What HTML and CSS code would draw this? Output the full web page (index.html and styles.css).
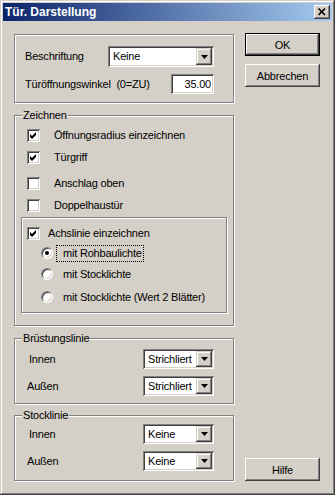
FILE: index.html
```html
<!DOCTYPE html>
<html lang="de">
<head>
  <meta charset="UTF-8">
  <title>Tür. Darstellung</title>
  <link rel="stylesheet" href="styles.css">
</head>
<body>
  <div class="window">
    <div class="titlebar">
      <span class="title">Tür. Darstellung</span>
      <span class="close-btn">
        <svg width="16" height="14" viewBox="0 0 16 14"><path d="M4.5 3.5 L11 10 M11 3.5 L4.5 10" stroke="#000" stroke-width="1.7" fill="none"/></svg>
      </span>
    </div>

    <div class="content">
      <div class="left">
        <div class="group group-top">
          <div class="row row-combo">
            <span class="label">Beschriftung</span>
            <div class="combo combo-wide">
              <span class="combo-text">Keine</span>
              <span class="drop"><svg width="7" height="4" viewBox="0 0 7 4"><polygon points="0,0 7,0 3.5,4" fill="#000"/></svg></span>
            </div>
          </div>
          <div class="row row-edit">
            <span class="label">Türöffnungswinkel&nbsp; (0=ZU)</span>
            <div class="edit">35.00</div>
          </div>
        </div>

        <div class="group group-draw">
          <div class="caption">Zeichnen</div>
          <div class="check-row first">
            <span class="box"><svg width="7" height="7" viewBox="0 0 7 7"><polygon points="0,2 2,4 6,0 6,3 2,7 0,5" fill="#000"/></svg></span>
            <span class="check-label">Öffnungsradius einzeichnen</span>
          </div>
          <div class="check-row">
            <span class="box"><svg width="7" height="7" viewBox="0 0 7 7"><polygon points="0,2 2,4 6,0 6,3 2,7 0,5" fill="#000"/></svg></span>
            <span class="check-label">Türgriff</span>
          </div>
          <div class="check-row third">
            <span class="box"></span>
            <span class="check-label">Anschlag oben</span>
          </div>
          <div class="check-row">
            <span class="box"></span>
            <span class="check-label">Doppelhaustür</span>
          </div>

          <div class="subgroup">
            <div class="sub-check">
              <span class="box"><svg width="7" height="7" viewBox="0 0 7 7"><polygon points="0,2 2,4 6,0 6,3 2,7 0,5" fill="#000"/></svg></span>
              <span class="sub-label">Achslinie einzeichnen</span>
            </div>
            <div class="radio-row">
              <span class="radio checked"><span class="dot"></span></span>
              <span class="radio-label focus">mit Rohbaulichte</span>
            </div>
            <div class="radio-row r2">
              <span class="radio"></span>
              <span class="radio-label">mit Stocklichte</span>
            </div>
            <div class="radio-row r3">
              <span class="radio"></span>
              <span class="radio-label">mit Stocklichte (Wert 2 Blätter)</span>
            </div>
          </div>
        </div>

        <div class="group group-line group-bruest">
          <div class="caption">Brüstungslinie</div>
          <div class="row line-row first">
            <span class="label in">Innen</span>
            <div class="combo combo-small">
              <span class="combo-text">Strichliert</span>
              <span class="drop"><svg width="7" height="4" viewBox="0 0 7 4"><polygon points="0,0 7,0 3.5,4" fill="#000"/></svg></span>
            </div>
          </div>
          <div class="row line-row">
            <span class="label out">Außen</span>
            <div class="combo combo-small">
              <span class="combo-text">Strichliert</span>
              <span class="drop"><svg width="7" height="4" viewBox="0 0 7 4"><polygon points="0,0 7,0 3.5,4" fill="#000"/></svg></span>
            </div>
          </div>
        </div>

        <div class="group group-line group-stock">
          <div class="caption">Stocklinie</div>
          <div class="row line-row first">
            <span class="label in">Innen</span>
            <div class="combo combo-small">
              <span class="combo-text">Keine</span>
              <span class="drop"><svg width="7" height="4" viewBox="0 0 7 4"><polygon points="0,0 7,0 3.5,4" fill="#000"/></svg></span>
            </div>
          </div>
          <div class="row line-row">
            <span class="label out">Außen</span>
            <div class="combo combo-small">
              <span class="combo-text">Keine</span>
              <span class="drop"><svg width="7" height="4" viewBox="0 0 7 4"><polygon points="0,0 7,0 3.5,4" fill="#000"/></svg></span>
            </div>
          </div>
        </div>
      </div>

      <div class="right">
        <div class="btn default"><div class="btn-face">OK</div></div>
        <div class="btn cancel"><div class="btn-face">Abbrechen</div></div>
        <div class="btn help"><div class="btn-face">Hilfe</div></div>
      </div>
    </div>
  </div>
</body>
</html>
```

FILE: styles.css
```css
body {
  margin: 0;
  font-family: "Liberation Sans", Arial, sans-serif;
  font-size: 11px;
  letter-spacing: -0.2px;
  color: #000;
  background: #d4d0c8;
}

.window {
  width: 335px;
  height: 495px;
  box-sizing: border-box;
  padding: 3px;
  background: #d4d0c8;
  box-shadow: inset -1px -1px #404040, inset 1px 1px #d4d0c8, inset -2px -2px #808080, inset 2px 2px #fff;
  display: flex;
  flex-direction: column;
}

.titlebar {
  height: 18px;
  flex: none;
  display: flex;
  align-items: center;
  justify-content: space-between;
  padding: 0 2px 0 2px;
  background: linear-gradient(to right, #0a246a, #a6caf0);
}

.title {
  color: #fff;
  font-weight: bold;
  font-size: 12px;
  letter-spacing: 0;
}

.close-btn {
  width: 16px;
  height: 14px;
  display: flex;
  background: #d4d0c8;
  box-shadow: inset -1px -1px #404040, inset 1px 1px #fff, inset -2px -2px #808080;
}

.content {
  flex: 1;
  display: flex;
  gap: 11px;
  padding: 12px 12px 11px 11px;
  min-height: 0;
}

.left {
  width: 220px;
  padding-top: 1px;
  display: flex;
  flex-direction: column;
}

.right {
  width: 75px;
  display: flex;
  flex-direction: column;
}

/* group boxes */
.group {
  box-sizing: border-box;
  border: 1px solid #808080;
  box-shadow: inset 1px 1px #fff, 1px 1px #fff;
  flex: none;
}

.caption {
  width: fit-content;
  margin: -7px 0 0 7px;
  padding: 0 1px;
  line-height: 13px;
  background: #d4d0c8;
}

.row {
  display: flex;
  align-items: center;
  justify-content: space-between;
  line-height: 13px;
}

.group-top {
  height: 69px;
  padding: 11px 19px 0 10px;
}

.row-combo { height: 21px; }
.row-edit { height: 20px; margin-top: 7px; }

.group-draw {
  height: 211px;
  margin-top: 12px;
}

.check-row {
  height: 22px;
  margin-left: 12px;
  display: flex;
  align-items: center;
  line-height: 13px;
}

.check-row.first { margin-top: 2px; }
.check-row.third { margin-top: 4px; }

.check-label { margin-left: 14px; }

.box {
  width: 13px;
  height: 13px;
  box-sizing: border-box;
  background: #fff;
  box-shadow: inset 1px 1px #808080, inset -1px -1px #fff, inset 2px 2px #404040, inset -2px -2px #d4d0c8;
  display: flex;
  align-items: center;
  justify-content: center;
  flex: none;
}

.subgroup {
  width: 206px;
  height: 96px;
  box-sizing: border-box;
  margin: 1px 0 0 6px;
  padding: 5px 0 0 5px;
  border: 1px solid #808080;
  box-shadow: inset 1px 1px #fff, 1px 1px #fff;
}

.sub-check {
  height: 20px;
  display: flex;
  align-items: center;
  line-height: 13px;
}

.sub-label { margin-left: 8px; }

.radio-row {
  height: 20px;
  margin-left: 14px;
  display: flex;
  align-items: center;
  line-height: 13px;
}

.radio-row.r2 { margin-top: 1px; }
.radio-row.r3 { margin-top: 3px; }

.radio {
  width: 12px;
  height: 12px;
  box-sizing: border-box;
  border-radius: 50%;
  background: #fff;
  border: 1px solid;
  border-color: #808080 #fff #fff #808080;
  box-shadow: inset 1px 1px #404040, inset -1px -1px #d4d0c8;
  display: flex;
  align-items: center;
  justify-content: center;
  flex: none;
}

.dot {
  width: 4px;
  height: 4px;
  border-radius: 50%;
  background: #000;
}

.radio-label {
  margin-left: 3px;
  padding: 1px 1px 1px 6px;
  border: 1px dotted transparent;
}

.radio-label.focus { border-color: #000; }

.group-line {
  height: 66px;
  padding-right: 19px;
}

.group-bruest { margin-top: 12px; }
.group-stock { margin-top: 11px; }

.line-row { height: 20px; margin-top: 7px; }
.group-bruest .line-row.first { margin-top: 4px; }
.group-stock .line-row.first { margin-top: 2px; }

.label.in { margin-left: 14px; }
.label.out { margin-left: 12px; }

/* combo + edit */
.combo {
  box-sizing: border-box;
  display: flex;
  align-items: stretch;
  padding: 2px;
  background: #fff;
  box-shadow: inset 1px 1px #808080, inset -1px -1px #fff, inset 2px 2px #404040, inset -2px -2px #d4d0c8;
}

.combo-wide { width: 106px; height: 21px; }
.combo-small { width: 71px; height: 20px; }

.combo-text {
  flex: 1;
  padding-left: 3px;
  display: flex;
  align-items: center;
}

.drop {
  width: 16px;
  background: #d4d0c8;
  box-shadow: inset -1px -1px #404040, inset 1px 1px #d4d0c8, inset -2px -2px #808080, inset 2px 2px #fff;
  display: flex;
  align-items: center;
  justify-content: center;
}

.edit {
  width: 43px;
  height: 20px;
  box-sizing: border-box;
  padding: 2px 3px 0 2px;
  text-align: right;
  line-height: 16px;
  background: #fff;
  box-shadow: inset 1px 1px #808080, inset -1px -1px #fff, inset 2px 2px #404040, inset -2px -2px #d4d0c8;
}

/* buttons */
.btn {
  width: 75px;
  height: 23px;
  box-sizing: border-box;
  display: flex;
}

.btn-face {
  flex: 1;
  display: flex;
  align-items: center;
  justify-content: center;
  background: #d4d0c8;
  box-shadow: inset -1px -1px #404040, inset 1px 1px #fff, inset -2px -2px #808080;
}

.btn.default { border: 1px solid #000; }
.btn.cancel { margin-top: 8px; }
.btn.help { margin-top: auto; }
```
